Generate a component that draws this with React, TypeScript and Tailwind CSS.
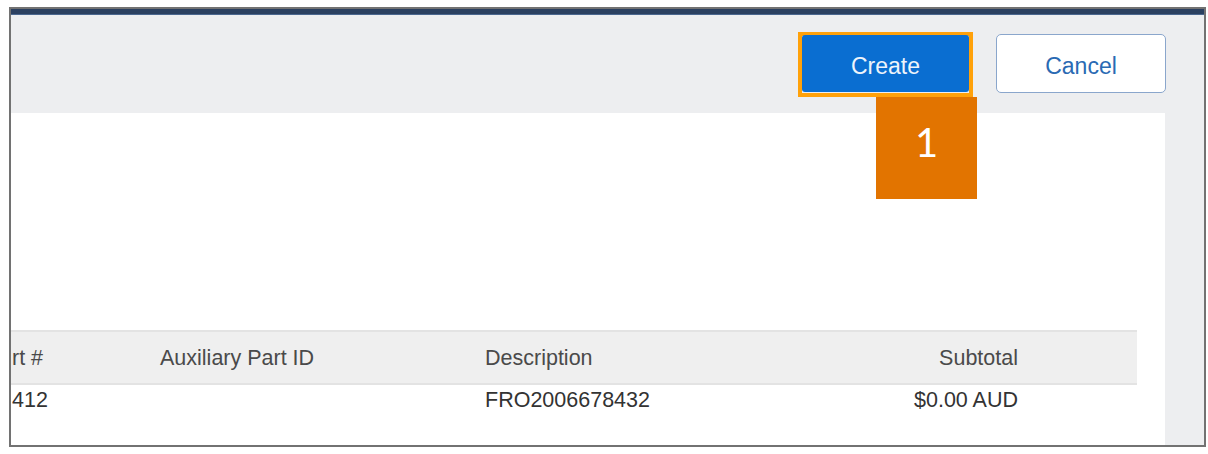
import React from "react";

export default function App() {
  return (
    <div className="w-[1208px] h-[454px] bg-white overflow-hidden" style={{ fontFamily: '"Liberation Sans", Arial, sans-serif' }}>
      <div className="ml-[9px] mt-[7px] w-[1197px] h-[440px] border-2 border-[#727272] flex flex-col">
        <div className="h-[5px] bg-[#2b4060]" />
        <div className="h-px bg-[#4a668e]" />
        <div className="h-[98px] bg-[#edeef0] flex justify-end items-start pt-[17px] pr-[38px]">
          <div className="relative w-[175px] h-[65px] border-[4px] border-[#ffa10a]">
            <div className="w-full h-full -mt-px pt-[6px] rounded-[3px] bg-[#0a6ed1] flex items-center justify-center text-[23px] text-[#eef4fb]">
              Create
            </div>
            <div
              className="absolute left-[74px] top-[61px] w-[101px] h-[102px] bg-[#e27400] flex items-center justify-center z-10 text-white text-[40px] leading-none"
              style={{ fontFamily: 'Lato, "Open Sans", sans-serif' }}
            >
              <span className="-mt-[12px]">1</span>
            </div>
          </div>
          <div className="ml-[23px] mt-[2px] w-[170px] h-[59px] pt-[6px] rounded-[5px] border border-[#8aa6cc] bg-white flex items-center justify-center text-[23px] text-[#2a6ab3]">
            Cancel
          </div>
        </div>
        <div className="flex-1 flex">
          <div className="w-[1154px] bg-white pt-[217px]">
            <div className="w-[1126px]">
              <div className="h-[55px] pt-px bg-[#efefef] border-t-2 border-b-2 border-[#e3e3e3] flex items-center text-[21.5px] text-[#4a4a4a]">
                <div className="w-[149px] pl-px">rt #</div>
                <div className="w-[325px]">Auxiliary Part ID</div>
                <div className="w-[400px]">Description</div>
                <div className="w-[133px] text-right">Subtotal</div>
              </div>
              <div className="h-[30px] flex items-center text-[21.5px] text-[#333333]">
                <div className="w-[149px] pl-px">412</div>
                <div className="w-[325px]"></div>
                <div className="w-[400px]">FRO2006678432</div>
                <div className="w-[133px] text-right">$0.00 AUD</div>
              </div>
            </div>
          </div>
          <div className="flex-1 bg-[#edeef0]" />
        </div>
      </div>
    </div>
  );
}
